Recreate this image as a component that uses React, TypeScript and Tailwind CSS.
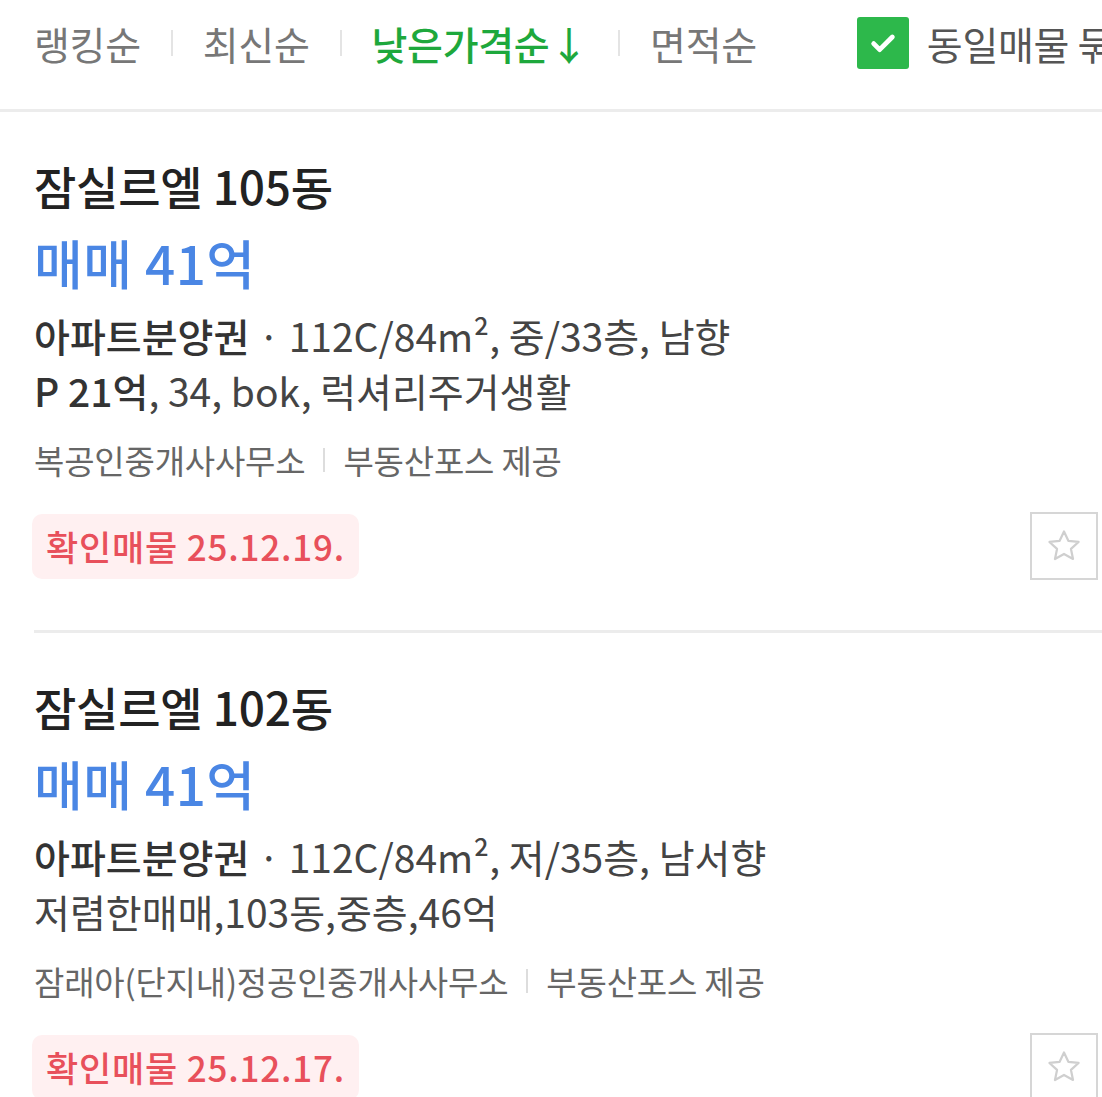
import React from "react";

const FONT = { fontFamily: '"Noto Sans CJK KR", "Noto Sans", sans-serif' };

function Star() {
  return (
    <div className="w-[68px] h-[68px] border-2 border-[#d6d6d6] flex items-center justify-center bg-white">
      <svg width="38" height="38" viewBox="0 0 24 24" fill="none" stroke="#cfcfcf" strokeWidth="1.4" strokeLinejoin="round">
        <path d="M12 2.8l2.75 5.9 6.45.75-4.8 4.4 1.3 6.35L12 17l-5.7 3.2 1.3-6.35-4.8-4.4 6.45-.75z" />
      </svg>
    </div>
  );
}

type Item = {
  title: string;
  price: string;
  type: string;
  spec: string;
  descBold?: string;
  desc: string;
  agent: string;
  date: string;
};

const items: Item[] = [
  {
    title: "잠실르엘 105동",
    price: "매매 41억",
    type: "아파트분양권",
    spec: "112C/84m², 중/33층, 남향",
    descBold: "P 21억",
    desc: ", 34, bok, 럭셔리주거생활",
    agent: "복공인중개사사무소",
    date: "확인매물 25.12.19.",
  },
  {
    title: "잠실르엘 102동",
    price: "매매 41억",
    type: "아파트분양권",
    spec: "112C/84m², 저/35층, 남서향",
    desc: "저렴한매매,103동,중층,46억",
    agent: "잠래아(단지내)정공인중개사사무소",
    date: "확인매물 25.12.17.",
  },
];

function Listing({ it, last }: { it: Item; last: boolean }) {
  return (
    <div className="pl-[34px]">
      <div className={"pt-[48px] pb-[50px] pr-[4px] " + (last ? "" : "border-b-[3px] border-[#ececec]")}>
        <div className="h-[50px] leading-[50px] text-[46px] font-medium text-[#222] tracking-[-0.2px] whitespace-nowrap">{it.title}</div>
        <div className="mt-[25px] h-[54px] leading-[54px] text-[53px] font-medium text-[#4a86e4] tracking-[0.5px] whitespace-nowrap">{it.price}</div>
        <div className="mt-[21px] h-[50px] leading-[50px] text-[39px] text-[#444] tracking-[0px] whitespace-nowrap">
          <span className="font-medium text-[#333]">{it.type}</span>
          <span> · {it.spec}</span>
        </div>
        <div className="mt-[5px] h-[50px] leading-[50px] text-[39px] text-[#444] tracking-[0px] whitespace-nowrap">
          {it.descBold && <span className="font-medium text-[#333]">{it.descBold}</span>}
          <span>{it.desc}</span>
        </div>
        <div className="mt-[23px] h-[44px] leading-[44px] text-[33px] text-[#666] tracking-[-0.2px] flex items-center whitespace-nowrap">
          <span>{it.agent}</span>
          <span className="mx-[18px] w-[2px] h-[24px] bg-[#ddd]" />
          <span>부동산포스 제공</span>
        </div>
        <div className="mt-[30px] flex items-center justify-between">
          <div className="-ml-[2px] h-[65px] px-[14px] rounded-[10px] bg-[#fff0f1] flex items-center text-[35px] font-medium text-[#e8505b] tracking-[0.8px] whitespace-nowrap">
            {it.date}
          </div>
          <Star />
        </div>
      </div>
    </div>
  );
}

export default function App() {
  return (
    <div className="w-[1102px] h-[1097px] overflow-hidden bg-white" style={FONT}>
      <div className="h-[112px] border-b-[3px] border-[#ececec] pl-[34px] flex items-start pt-[19px] whitespace-nowrap overflow-hidden">
        <div className="flex items-center h-[48px] text-[39px] text-[#777] tracking-[-0.3px]">
          <span>랭킹순</span>
          <span className="mx-[30px] w-[2px] h-[26px] bg-[#e4e4e4]" />
          <span>최신순</span>
          <span className="mx-[30px] w-[2px] h-[26px] bg-[#e4e4e4]" />
          <span className="text-[#1ea83c] font-medium">낮은가격순↓</span>
          <span className="mx-[30px] w-[2px] h-[26px] bg-[#e4e4e4]" />
          <span>면적순</span>
          <div className="ml-[100px] w-[52px] h-[52px] rounded-[3px] bg-[#2db84b] flex items-center justify-center">
            <svg width="32" height="32" viewBox="0 0 24 24" fill="none" stroke="#fff" strokeWidth="3.6" strokeLinecap="round" strokeLinejoin="round">
              <path d="M5 12.5l4.5 4.5L19 7.5" />
            </svg>
          </div>
          <span className="ml-[18px] text-[#555]">동일매물 묶기</span>
        </div>
      </div>
      {items.map((it, i) => (
        <Listing key={i} it={it} last={i === items.length - 1} />
      ))}
    </div>
  );
}
